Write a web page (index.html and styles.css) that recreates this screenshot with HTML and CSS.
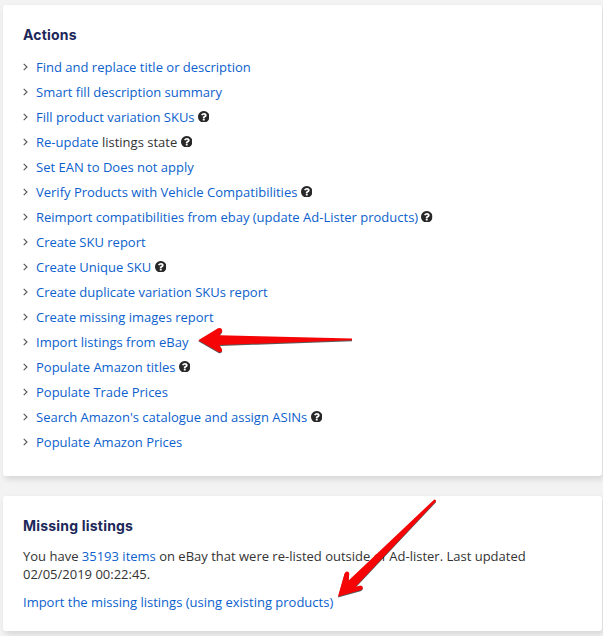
FILE: index.html
```html
<!DOCTYPE html>
<html lang="en">
<head>
<meta charset="utf-8">
<title>Listing actions</title>
<link rel="stylesheet" href="styles.css">
</head>
<body>
<svg width="0" height="0" class="defs" aria-hidden="true">
  <symbol id="help" viewBox="0 128 1536 1536">
    <path d="M896 1376v-192q0-14-9-23t-23-9h-192q-14 0-23 9t-9 23v192q0 14 9 23t23 9h192q14 0 23-9t9-23zm256-672q0-88-55.500-163t-138.500-116-170.500-41q-243 0-371 213-15 24 8 42l132 100q7 6 19 6 16 0 25-12 53-68 86-92 34-24 86-24 48 0 85.500 26t37.500 59q0 38-20 61t-68 45q-63 28-115.500 86.500t-52.500 125.500v36q0 14 9 23t23 9h192q14 0 23-9t9-23q0-19 21.500-49.500t54.500-49.500q32-18 49-28.500t46-35 44.500-48 28-60.500 12.500-81zm384 192q0 209-103 385.500t-279.500 279.500-385.500 103-385.500-103-279.500-279.500-103-385.500 103-385.500 279.500-279.500 385.500-103 385.500 103 279.500 279.500 103 385.500z"/>
  </symbol>
  <symbol id="chevron" viewBox="0 0 5 8">
    <path d="M.7 .8 4 4 .7 7.200" fill="none" stroke="currentColor" stroke-width="1.100"/>
  </symbol>
</svg>
<main class="page">
  <section class="card actions">
    <h2>Actions</h2>
    <ul>
      <li><svg class="chevron"><use href="#chevron"/></svg><a>Find and replace title or description</a></li>
      <li><svg class="chevron"><use href="#chevron"/></svg><a>Smart fill description summary</a></li>
      <li><svg class="chevron"><use href="#chevron"/></svg><a>Fill product variation SKUs</a><svg class="help"><use href="#help"/></svg></li>
      <li><svg class="chevron"><use href="#chevron"/></svg><span><a>Re-update</a> listings state</span><svg class="help"><use href="#help"/></svg></li>
      <li><svg class="chevron"><use href="#chevron"/></svg><a>Set EAN to Does not apply</a></li>
      <li><svg class="chevron"><use href="#chevron"/></svg><a>Verify Products with Vehicle Compatibilities</a><svg class="help"><use href="#help"/></svg></li>
      <li><svg class="chevron"><use href="#chevron"/></svg><a>Reimport compatibilities from ebay (update Ad-Lister products)</a><svg class="help"><use href="#help"/></svg></li>
      <li><svg class="chevron"><use href="#chevron"/></svg><a>Create SKU report</a></li>
      <li><svg class="chevron"><use href="#chevron"/></svg><a>Create Unique SKU</a><svg class="help"><use href="#help"/></svg></li>
      <li><svg class="chevron"><use href="#chevron"/></svg><a>Create duplicate variation SKUs report</a></li>
      <li><svg class="chevron"><use href="#chevron"/></svg><a>Create missing images report</a></li>
      <li><svg class="chevron"><use href="#chevron"/></svg><a>Import listings from eBay</a></li>
      <li><svg class="chevron"><use href="#chevron"/></svg><a>Populate Amazon titles</a><svg class="help"><use href="#help"/></svg></li>
      <li><svg class="chevron"><use href="#chevron"/></svg><a>Populate Trade Prices</a></li>
      <li><svg class="chevron"><use href="#chevron"/></svg><a>Search Amazon's catalogue and assign ASINs</a><svg class="help"><use href="#help"/></svg></li>
      <li><svg class="chevron"><use href="#chevron"/></svg><a>Populate Amazon Prices</a></li>
    </ul>
  </section>
  <section class="card missing">
    <h2>Missing listings</h2>
    <p>You have <a>35193 items</a> on eBay that were re-listed outside of Ad-lister. Last updated 02/05/2019 00:22:45.</p>
    <p><a>Import the missing listings (using existing products)</a></p>
  </section>
  <svg class="arrows" viewBox="0 0 603 636" aria-hidden="true">
    <path d="M198.300 340.300 218 328.300Q221.500 327 222.200 330.200 222.400 332 220.800 333.200L219.500 335.200 352 338.400V340.300L219.500 345 221.400 348.200Q222.800 350.300 221.500 351.600 220 353 217.800 351.400Z"/>
    <path d="M338 596.500 344.600 573.200Q346 570.800 348.200 571.800 349.800 573 349 575L348.600 580.500 434 499.700Q436 499 436 501.300L355.500 586.800 360.500 585.500Q362.800 585.700 362.900 587.800 362.700 589.600 360.500 590.200Z"/>
  </svg>
</main>
</body>
</html>
```
FILE: styles.css
```css
* {
  box-sizing: border-box;
}

body {
  margin: 0;
  background: #f3f3f3;
  color: #333;
  font: 13px/18px "Open Sans", sans-serif;
}

.defs {
  position: absolute;
}

.page {
  position: relative;
  display: flex;
  flex-direction: column;
  gap: 20px;
  height: 636px;
  padding: 5px 1px 0 3px;
  overflow: hidden;
}

.card {
  flex: none;
  padding: 20px;
  background: #fff;
  border-radius: 3px;
  box-shadow: 2px 3px 6px rgba(0, 0, 0, .13);
}

.actions {
  height: 471px;
}

.missing {
  height: 135px;
}

h2 {
  margin: 0;
  color: #1c2859;
  font: 700 14px/20px Inter, sans-serif;
  letter-spacing: .2px;
}

ul {
  margin: 9px 0 0;
  padding: 0;
  list-style: none;
}

li {
  display: flex;
  align-items: center;
  height: 25px;
  white-space: nowrap;
}

a {
  color: #0c5fcd;
}

p {
  margin: 11px 0 0;
}

p + p {
  margin-top: 10px;
}

.chevron {
  width: 5px;
  height: 8px;
  margin: 1px 8px 0 0;
  color: #555;
}

.help {
  width: 11.5px;
  height: 11.5px;
  margin-left: 3.3px;
  fill: #282828;
}

.arrows {
  position: absolute;
  top: 0;
  left: 0;
  width: 603px;
  height: 636px;
  fill: #f50505;
  filter: drop-shadow(.5px 1px .7px rgba(0, 0, 0, .65));
  pointer-events: none;
}
```
